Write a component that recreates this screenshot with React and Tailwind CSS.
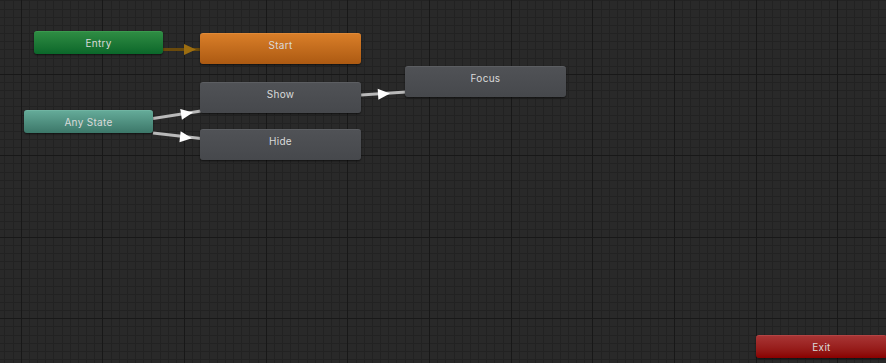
import React from 'react';

const W = 886;
const H = 363;

// grid lines for the animator canvas
function gridLines(origin, step, max) {
    const out = [];
    for (let k = -20; k < 200; k++) {
        const p = Math.round(origin + k * step);
        if (p < 0) continue;
        if (p > max) break;
        out.push({ p, major: ((k % 10) + 10) % 10 === 0 });
    }
    return out;
}

function Grid() {
    const xs = gridLines(20.67, 8.167, W);
    const ys = gridLines(155.3, 8.15, H);
    return (
        <svg className="absolute inset-0" width={W} height={H}>
            {xs.filter(l => !l.major).map(l => (
                <line key={'vx' + l.p} x1={l.p + 0.5} y1="0" x2={l.p + 0.5} y2={H} stroke="#222222" strokeWidth="1" />
            ))}
            {ys.filter(l => !l.major).map(l => (
                <line key={'vy' + l.p} x1="0" y1={l.p + 0.5} x2={W} y2={l.p + 0.5} stroke="#222222" strokeWidth="1" />
            ))}
            {xs.filter(l => l.major).map(l => (
                <line key={'mx' + l.p} x1={l.p + 0.5} y1="0" x2={l.p + 0.5} y2={H} stroke="#181818" strokeWidth="1" />
            ))}
            {ys.filter(l => l.major).map(l => (
                <line key={'my' + l.p} x1="0" y1={l.p + 0.5} x2={W} y2={l.p + 0.5} stroke="#181818" strokeWidth="1" />
            ))}
        </svg>
    );
}

function Arrow({ x1, y1, x2, y2, ax, ay, line, head }) {
    const angle = Math.atan2(y2 - y1, x2 - x1) * 180 / Math.PI;
    return (
        <g>
            <line x1={x1} y1={y1} x2={x2} y2={y2} stroke={line} strokeWidth="3" />
            <polygon points="-6,-5.5 6,0 -6,5.5" fill={head} transform={`translate(${ax} ${ay}) rotate(${angle})`} />
        </g>
    );
}

function Transitions() {
    return (
        <svg className="absolute inset-0" width={W} height={H}>
            <Arrow x1={163} y1={49.5} x2={201} y2={49.5} ax={190} ay={49.5} line="#6a4a0c" head="#9c6d10" />
            <Arrow x1={153} y1={118.5} x2={201} y2={111} ax={187} ay={113.5} line="#b9b9b9" head="#ffffff" />
            <Arrow x1={153} y1={133} x2={201} y2={138.5} ax={186} ay={137.5} line="#b9b9b9" head="#ffffff" />
            <Arrow x1={361} y1={95} x2={406} y2={92} ax={384} ay={93.8} line="#b9b9b9" head="#ffffff" />
        </svg>
    );
}

function Node({ label, className }) {
    return (
        <div className={`absolute rounded-[3px] shadow-[0_1px_2px_rgba(0,0,0,0.6)] ${className}`}>
            <div className="h-[23px] leading-[23px] text-center text-[10px] tracking-[0.3px] text-[#dadada] font-['Inter','Noto_Sans',sans-serif]">
                {label}
            </div>
        </div>
    );
}

export default function App() {
    return (
        <div className="relative w-[886px] h-[363px] overflow-hidden bg-[#292929]">
            <Grid />
            <Transitions />

            <Node label="Entry" className="left-[34px] top-[31px] w-[129px] h-[23px] bg-gradient-to-b from-[#2e8c43] to-[#0a672a] border-t border-[#3a9a4e]" />
            <Node label="Start" className="left-[200px] top-[33px] w-[161px] h-[31px] bg-gradient-to-b from-[#d97e28] to-[#ac5a12] border-t border-[#e08a38]" />
            <Node label="Show" className="left-[200px] top-[82px] w-[161px] h-[31px] bg-gradient-to-b from-[#505256] to-[#46484c] border-t border-[#5c5e62]" />
            <Node label="Hide" className="left-[200px] top-[129px] w-[161px] h-[31px] bg-gradient-to-b from-[#505256] to-[#46484c] border-t border-[#5c5e62]" />
            <Node label="Focus" className="left-[405px] top-[66px] w-[161px] h-[31px] bg-gradient-to-b from-[#505256] to-[#46484c] border-t border-[#5c5e62]" />
            <Node label="Any State" className="left-[24px] top-[110px] w-[129px] h-[23px] bg-gradient-to-b from-[#64aa98] to-[#3c7769] border-t border-[#70b4a2]" />
            <Node label="Exit" className="left-[756px] top-[335px] w-[131px] h-[23px] bg-gradient-to-b from-[#a83434] to-[#8a0000] border-t border-[#b44444]" />
        </div>
    );
}
